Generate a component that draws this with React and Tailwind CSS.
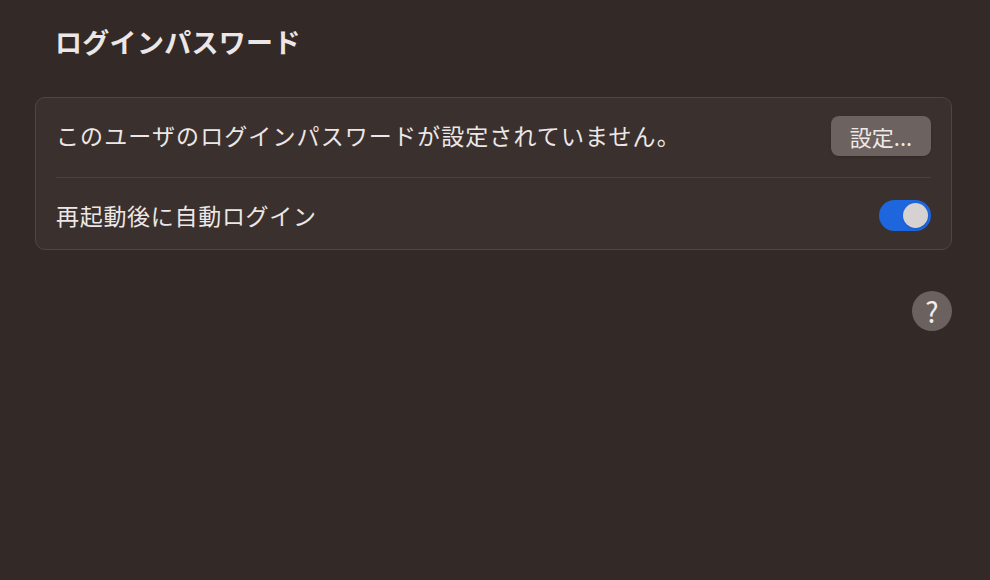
import React from "react";

const font = { fontFamily: '"Noto Sans CJK JP", "Noto Sans", sans-serif' };

const Toggle = ({ on }) => (
  <div className={`w-[52px] h-[31px] rounded-full p-[3px] flex items-center ${on ? "bg-[#1e66de] justify-end" : "bg-[#5a5150] justify-start"}`}>
    <div className="w-[25px] h-[25px] rounded-full bg-[#d6d2d1] shadow" />
  </div>
);

export default function App() {
  return (
    <div className="w-[990px] h-[580px] bg-[#332927] text-[#ece7e6] overflow-hidden" style={font}>
      <div className="pl-[55px] pt-[23px] h-[97px]">
        <h1 className="text-[27px] font-bold leading-[38px] tracking-[0.3px]">ログインパスワード</h1>
      </div>
      <div className="mx-[35px] w-[917px] rounded-[10px] border border-[#4f4644] bg-[#3a302e] px-[20px]">
        <div className="h-[80px] flex items-start justify-between border-b border-[#4b4240] pt-[18px]">
          <span className="text-[23px] leading-[38px] tracking-[1.1px]">このユーザのログインパスワードが設定されていません。</span>
          <button className="h-[40px] w-[100px] rounded-[8px] bg-[#6c6361] text-[22px] text-[#eee9e8] flex items-center justify-center shadow">
            設定...
          </button>
        </div>
        <div className="h-[71px] flex items-center justify-between pt-[3px]">
          <span className="text-[23px] leading-none tracking-[0.7px]">再起動後に自動ログイン</span>
          <Toggle on />
        </div>
      </div>
      <div className="flex justify-end pr-[38px] pt-[41px]">
        <div className="w-[40px] h-[40px] rounded-full bg-[#6b6260] flex items-center justify-center text-[28px] font-normal text-[#f2eeed]">
          ?
        </div>
      </div>
    </div>
  );
}
